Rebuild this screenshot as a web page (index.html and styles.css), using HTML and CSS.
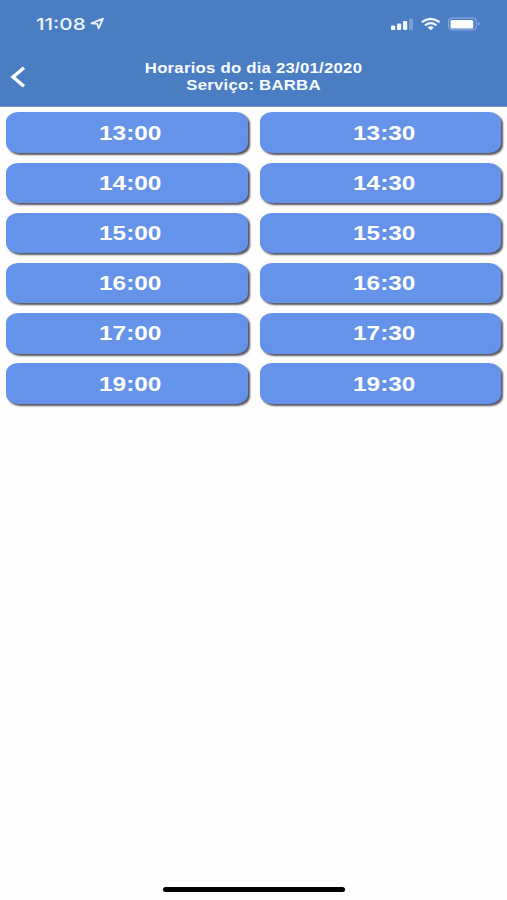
FILE: index.html
```
<!DOCTYPE html>
<html lang="pt-BR">
<head>
    <meta charset="UTF-8">
    <meta name="viewport" content="width=device-width, initial-scale=1.0">
    <title>Horarios</title>
    <link rel="stylesheet" href="styles.css">
</head>
<body>
  <header>
    <div class="status">
      <span class="hora">11:08</span>
      <svg class="local" width="14" height="14" viewBox="0 0 14 14"><path d="M1.4 6.3L13 1.6L8.6 11.4L7.3 6.9Z" fill="none" stroke="#e9f4ff" stroke-width="1.8" stroke-linejoin="round"/></svg>
      <svg class="icones" width="92" height="16" viewBox="0 0 92 16">
        <g fill="#f5faff">
          <rect x="1" y="9.5" width="4.2" height="4.5" rx="1"/>
          <rect x="7" y="7.5" width="4.2" height="6.5" rx="1"/>
          <rect x="13" y="5" width="4.2" height="9" rx="1"/>
          <rect x="19" y="2.5" width="4" height="11.5" rx="1" opacity=".28"/>
        </g>
        <g fill="none" stroke="#f5faff" stroke-width="2.2">
          <path d="M31.8 6.2Q40.7 -0.6 49.6 6.2"/>
          <path d="M35 9.3Q40.7 5 46.4 9.3"/>
        </g>
        <path d="M37.6 11.4Q40.7 9.2 43.8 11.4L40.7 14.2Z" fill="#f5faff"/>
        <rect x="58.7" y="2.2" width="27.6" height="11.6" rx="3.5" fill="none" stroke="#86aadd" stroke-width="1.2"/>
        <rect x="60.5" y="4" width="22.8" height="8.4" rx="1.5" fill="#fff"/>
        <path d="M88.3 6V10Q90.6 8 88.3 6Z" fill="#b0cbed"/>
      </svg>
    </div>
    <div class="topo">
      <svg class="voltar" width="16" height="22" viewBox="0 0 16 22"><path d="M14 1.8L3 11L14 20.2" fill="none" stroke="#fff" stroke-width="3.4"/></svg>
      <h1><span>Horarios do dia 23/01/2020</span><span>Serviço: BARBA</span></h1>
    </div>
  </header>
  <main class="horarios">
    <button class="opcao"><span>13:00</span></button>
    <button class="opcao"><span>13:30</span></button>
    <button class="opcao"><span>14:00</span></button>
    <button class="opcao"><span>14:30</span></button>
    <button class="opcao"><span>15:00</span></button>
    <button class="opcao"><span>15:30</span></button>
    <button class="opcao"><span>16:00</span></button>
    <button class="opcao"><span>16:30</span></button>
    <button class="opcao"><span>17:00</span></button>
    <button class="opcao"><span>17:30</span></button>
    <button class="opcao"><span>19:00</span></button>
    <button class="opcao"><span>19:30</span></button>
  </main>
  <div class="barra"></div>
</body>
</html>
```
FILE: styles.css
```
* {margin: 0; padding: 0; box-sizing: border-box;}
body {
    height: 900px;
    display: flex;
    flex-direction: column;
    background-color: #fefefe;
    font-family: "Liberation Sans", Arial, sans-serif;
    overflow: hidden;
}
header {height: 107px; background-color: #4b7dc3; color: #f8fcff; border-bottom: 1px solid #6f93c6;}
.status {height: 47px; padding: 0 25px 0 36px; display: flex; align-items: center;}
.hora {
    width: 54px;
    font-family: Inter, sans-serif;
    font-size: 16.5px;
    font-weight: 500;
    color: #eef7ff;
    transform: scaleX(1.25);
    transform-origin: left;
}
.icones {margin-left: auto;}
.topo {height: 59px; padding-left: 10px; display: flex; align-items: center;}
h1 {
    flex: 1;
    padding-right: 26px;
    text-align: center;
    font-size: 14.2px;
    line-height: 17px;
    letter-spacing: 0.2px;
}
h1 span {display: block; transform: scaleX(1.18);}
.horarios {
    display: grid;
    grid-template-columns: 241.5px 241.5px;
    grid-auto-rows: 40.5px;
    gap: 9.7px 12.2px;
    padding: 5.4px 0 0 6.3px;
}
.opcao {
    border: none;
    border-radius: 12px / 10px;
    background-color: #6493e9;
    box-shadow: 2px 2px 2px #55565f;
    color: #fff;
    font: bold 20.5px "Liberation Sans", Arial, sans-serif;
}
.opcao span {display: inline-block; transform: translateX(3px) scaleX(1.19);}
.barra {width: 182px; height: 5px; margin: auto auto 8px 162.5px; border-radius: 3px; background-color: #000;}
```
